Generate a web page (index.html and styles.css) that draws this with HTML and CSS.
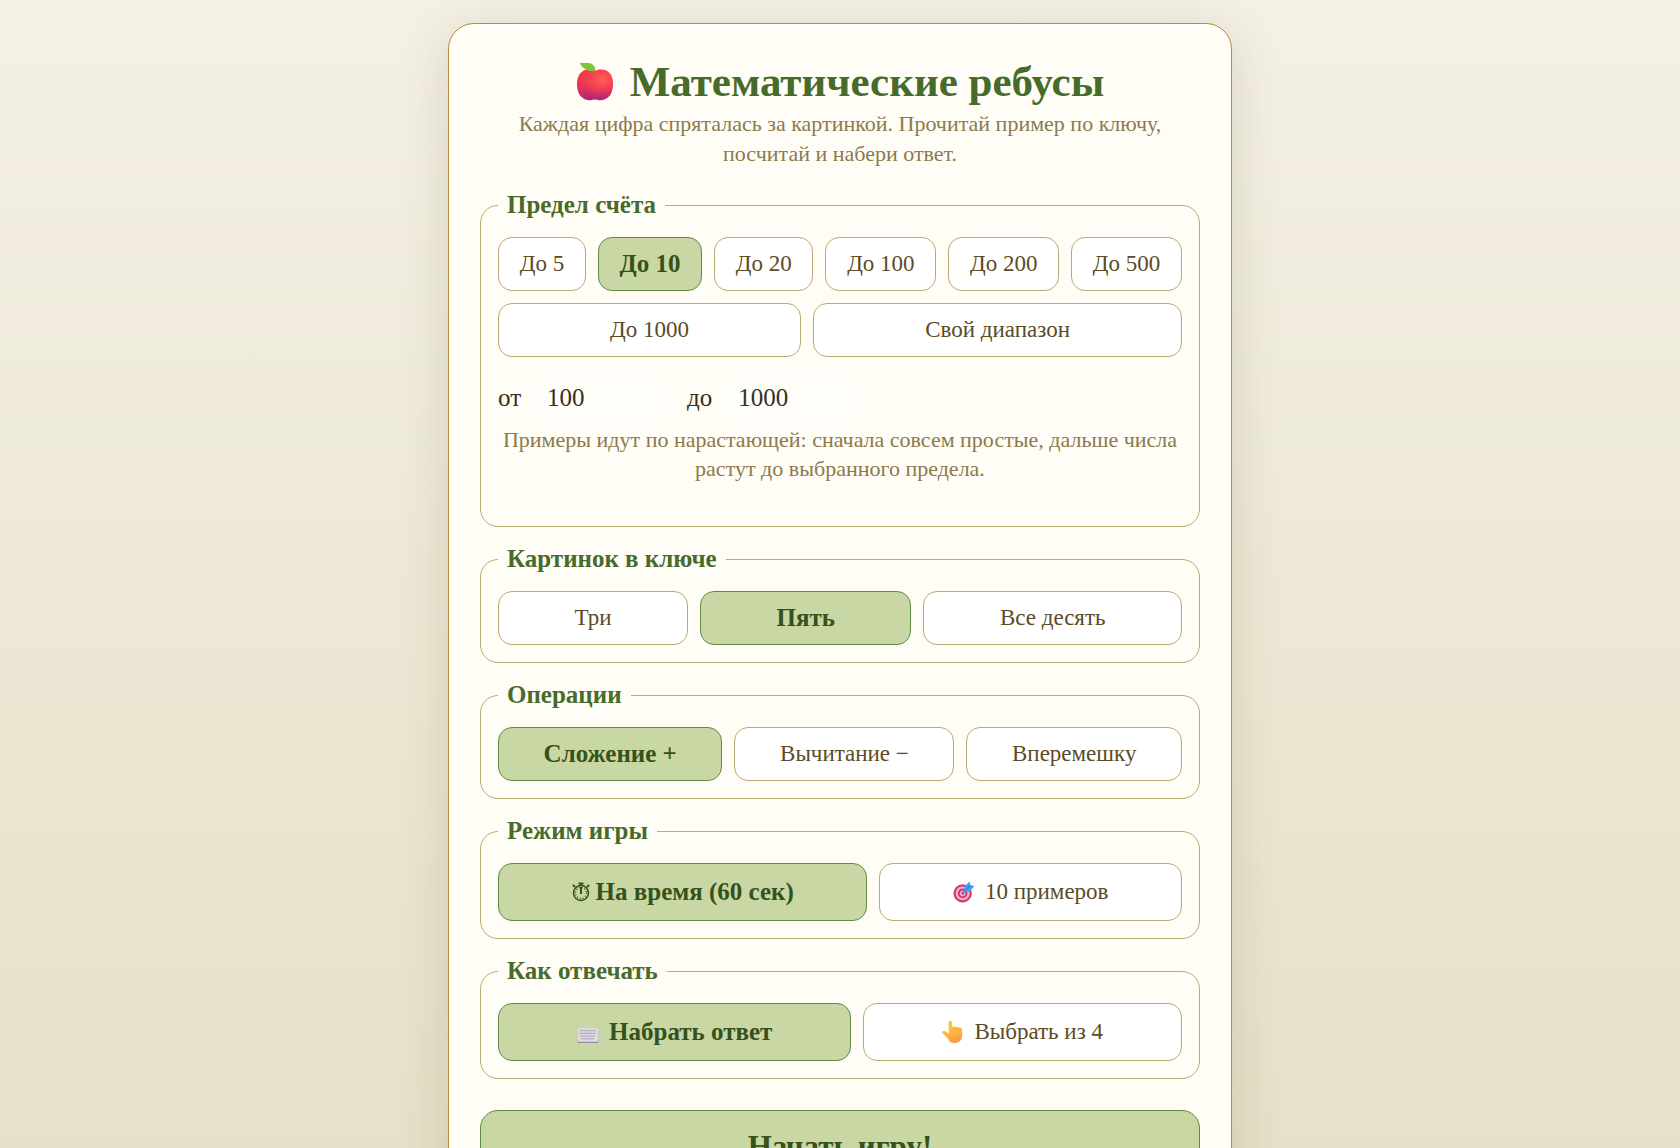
FILE: index.html
```
<!DOCTYPE html>
<html lang="ru">
<head>
	<meta charset="UTF-8">
	<meta name="viewport" content="width=device-width, initial-scale=1">
	<title>Математические ребусы</title>
	<link rel="stylesheet" href="styles.css">
</head>
<body>
	<main class="card">
		<header class="head">
			<h1 class="title">
				<svg class="apple" viewBox="0 0 40 40" aria-hidden="true">
					<defs>
						<linearGradient id="appleBase" x1="0" y1="0" x2="0" y2="1">
							<stop offset="0.4" stop-color="#f2384c"/>
							<stop offset="1" stop-color="#b0257c"/>
						</linearGradient>
						<radialGradient id="appleLight" cx="0.7" cy="0.32" r="0.6">
							<stop offset="0" stop-color="#ff6158"/>
							<stop offset="1" stop-color="#ff4050" stop-opacity="0"/>
						</radialGradient>
					</defs>
					<path d="M20 8.500C17 6.500 10 6 6 9.500C0 14 0 25 3 32C6 38 13 40 17 39C19 38.300 21 38.300 23 39C27 40 34 38 37 32C40 25 40 14 34 9.500C30 6 23 6.500 20 8.500Z" fill="url(#appleBase)"/>
					<path d="M20 8.500C17 6.500 10 6 6 9.500C0 14 0 25 3 32C6 38 13 40 17 39C19 38.300 21 38.300 23 39C27 40 34 38 37 32C40 25 40 14 34 9.500C30 6 23 6.500 20 8.500Z" fill="url(#appleLight)"/>
					<path d="M4 0H13C17 0 20.500 3.500 20.500 8.500C12 9 7 6.500 4 0Z" fill="#7fc436"/>
				</svg>
				Математические ребусы
			</h1>
			<p class="note">Каждая цифра спряталась за картинкой. Прочитай пример по ключу, посчитай и набери ответ.</p>
		</header>

		<fieldset class="group">
			<legend>Предел счёта</legend>
			<div class="options">
				<button type="button">До 5</button>
				<button type="button" class="on">До 10</button>
				<button type="button">До 20</button>
				<button type="button">До 100</button>
				<button type="button">До 200</button>
				<button type="button">До 500</button>
				<button type="button">До 1000</button>
				<button type="button">Свой диапазон</button>
			</div>
			<div class="range">
				<label for="from">от</label>
				<input type="text" inputmode="numeric" id="from" value="100">
				<label for="to">до</label>
				<input type="text" inputmode="numeric" id="to" value="1000">
			</div>
			<p class="note">Примеры идут по нарастающей: сначала совсем простые, дальше числа растут до выбранного предела.</p>
		</fieldset>

		<fieldset class="group">
			<legend>Картинок в ключе</legend>
			<div class="options">
				<button type="button">Три</button>
				<button type="button" class="on">Пять</button>
				<button type="button">Все десять</button>
			</div>
		</fieldset>

		<fieldset class="group">
			<legend>Операции</legend>
			<div class="options">
				<button type="button" class="on">Сложение +</button>
				<button type="button">Вычитание −</button>
				<button type="button">Вперемешку</button>
			</div>
		</fieldset>

		<fieldset class="group">
			<legend>Режим игры</legend>
			<div class="options tall">
				<button type="button" class="on timed">
					<svg class="watch" viewBox="0 0 18 20" aria-hidden="true">
						<g fill="none" stroke="#35511c">
							<circle cx="9" cy="11" r="7.500" stroke-width="1.500"/>
							<circle cx="9" cy="11" r="5.500" stroke-width="1.400" stroke-dasharray="1 1.880"/>
							<path d="M9 5V12" stroke-width="2"/>
							<path d="M6.500 1.500H11.500M9 1.500V4M15 5L17 3M3 5L1 3" stroke-width="2"/>
						</g>
					</svg>
					На время (60 сек)
				</button>
				<button type="button">
					<svg class="emoji" viewBox="0 0 24 24" aria-hidden="true">
						<circle cx="10.500" cy="13.500" r="10" fill="#d9386f"/>
						<circle cx="10.500" cy="13.500" r="7.600" fill="#f2b5cd"/>
						<circle cx="10.500" cy="13.500" r="5.200" fill="#d9386f"/>
						<circle cx="10.500" cy="13.500" r="3" fill="#f2b5cd"/>
						<circle cx="10.500" cy="13.500" r="1.300" fill="#d9386f"/>
						<path d="M10.500 13.500L17 7" stroke="#2374c4" stroke-width="1.500"/>
						<path d="M12 12L12.500 6L18 0.500L19 4.500L23.500 5.500L18 11.500Z" fill="#39a5f2"/>
						<path d="M13 10.500L19 4.500" stroke="#1f6fd0"/>
					</svg>
					10 примеров
				</button>
			</div>
		</fieldset>

		<fieldset class="group">
			<legend>Как отвечать</legend>
			<div class="options tall">
				<button type="button" class="on">
					<svg class="emoji" viewBox="0 0 24 24" aria-hidden="true">
						<rect x="0.500" y="10" width="23" height="14" rx="2" fill="#9b8ba8"/>
						<rect x="0.500" y="8" width="23" height="14.500" rx="2" fill="#dddbe2"/>
						<path d="M3 10.500H21M3 13.500H21M4 16.500H20M5 19.500H19" stroke="#aaa1b5" stroke-width="1.600" stroke-dasharray="1.500 0.500"/>
					</svg>
					Набрать ответ
				</button>
				<button type="button">
					<svg class="emoji" viewBox="0 0 24 24" aria-hidden="true">
						<defs>
							<linearGradient id="hand" x1="0" y1="0" x2="0.300" y2="1">
								<stop offset="0" stop-color="#ffc93a"/>
								<stop offset="0.600" stop-color="#fdbb3c"/>
								<stop offset="1" stop-color="#f99a4d"/>
							</linearGradient>
						</defs>
						<path d="M7 2C7 -0.500 11 -0.500 11 2V7C11.500 5.500 14 5.500 14.500 7C15.500 5.800 17.500 6 18 7.500C19 6.500 22 7 22 9V16C22 21 18 24 14 24C9 24 8 22 6.500 19L1 14C-0.500 12 1 10.300 3.500 11.300L7.500 14Z" fill="url(#hand)"/>
						<path d="M11 7V11M14.500 7V11M18 7.500V11" fill="none" stroke="#ee9c30" stroke-width="0.700"/>
					</svg>
					Выбрать из 4
				</button>
			</div>
		</fieldset>

		<button type="button" class="start">Начать игру!</button>
	</main>
</body>
</html>
```
FILE: styles.css
```
* { box-sizing: border-box; }
body {
	margin: 0;
	padding: 23px 16px;
	font-family: "Liberation Serif", serif;
	font-size: 23px;
	line-height: 28px;
	color: #33301f;
	background: linear-gradient(#f4f0e4, #e5dfc6);
}
button, input {
	font: inherit;
	color: inherit;
}
.card {
	max-width: 784px;
	margin: 0 auto;
	padding: 31px;
	border: 1px solid #b98a3c;
	border-radius: 26px;
	background: #fffdf6;
	box-shadow: 0 10px 50px rgba(80, 70, 30, 0.16);
}
.title {
	display: flex;
	justify-content: center;
	align-items: center;
	gap: 16px;
	margin: 0;
	font-size: 43px;
	line-height: 54px;
	color: #476b2a;
}
.apple {
	width: 38px;
	height: 38px;
}
.note {
	margin: 0;
	padding: 0 8px;
	font-size: 22px;
	line-height: 30px;
	text-align: center;
	color: #8a7a4d;
}
.group {
	min-width: 0;
	margin: 18px 0 0;
	padding: 18px 17px 17px;
	border: 1px solid #b9ab72;
	border-radius: 18px;
}
.head + .group { margin-top: 22px; }
legend {
	padding: 0 9px;
	font-size: 25px;
	font-weight: bold;
	color: #476b2a;
}
.options {
	display: flex;
	flex-wrap: wrap;
	gap: 12px;
}
.options button {
	display: flex;
	flex: 1 1 auto;
	justify-content: center;
	align-items: center;
	gap: 10px;
	height: 54px;
	padding: 0 20px;
	border: 1px solid #b9ab72;
	border-radius: 14px;
	background: #fff;
	color: #5b4b26;
}
.tall button { height: 58px; }
.options .on, .start {
	border-color: #5f8c45;
	background: #c8d7a3;
	font-size: 25px;
	font-weight: bold;
	color: #35511c;
}
.options .timed { gap: 6px; }
.emoji {
	width: 22px;
	height: 22px;
}
.watch {
	width: 18px;
	height: 20px;
}
.range {
	display: flex;
	align-items: center;
	gap: 10px;
	margin-top: 16px;
	font-size: 25px;
}
.range input {
	width: 136px;
	height: 50px;
	margin-right: 10px;
	padding: 0 16px;
	border: 0;
	border-radius: 12px;
	background: #fffdf8;
}
.group .note {
	margin: 2px 0 26px;
	padding: 0;
	line-height: 29px;
}
.start {
	display: block;
	width: 100%;
	height: 74px;
	margin-top: 31px;
	border: 1px solid #5f8c45;
	border-radius: 18px;
	font-size: 31px;
}
```
